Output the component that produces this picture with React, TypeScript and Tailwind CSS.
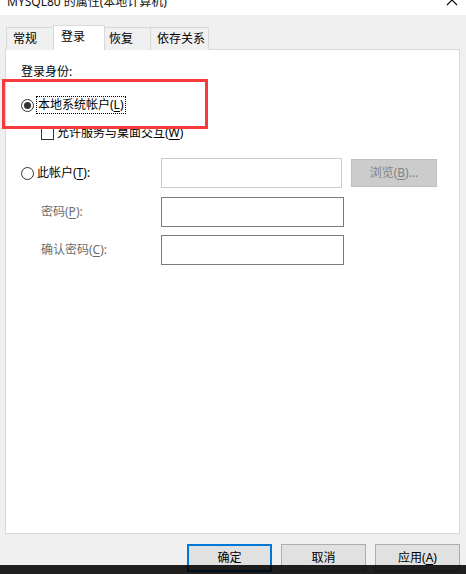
import React from "react";

const FONT = "font-['Noto_Sans','Noto_Sans_CJK_SC',sans-serif]";

function Radio({ checked }: { checked?: boolean }) {
  return (
    <span className="w-[13px] h-[13px] rounded-full border border-[#333333] bg-white flex items-center justify-center shrink-0">
      {checked && <span className="w-[7px] h-[7px] rounded-full bg-[#333333]" />}
    </span>
  );
}

function U({ children }: { children: React.ReactNode }) {
  return <span className="underline underline-offset-[2px]">{children}</span>;
}

export default function App() {
  return (
    <div
      className={`relative w-[466px] h-[574px] overflow-hidden bg-[#f0f0f0] text-[12px] leading-[16px] text-black ${FONT}`}
    >
      {/* title bar (cut off) */}
      <div className="h-[15px] bg-white overflow-hidden flex justify-between">
        <div className="ml-[7px] mt-[-6px] text-[12px] leading-[16px] text-[#111] whitespace-nowrap">
          MYSQL80 的属性(本地计算机)
        </div>
        <svg
          className="mr-[8px] mt-[-6px] shrink-0"
          width="12"
          height="12"
          viewBox="0 0 12 12"
        >
          <path d="M1 1 L11 11 M11 1 L1 11" stroke="#000" strokeWidth="1.1" fill="none" />
        </svg>
      </div>

      {/* tabs */}
      <div className="mt-[10px] h-[25px] pl-[6px] flex items-end">
        <div className="w-[47px] h-[23px] border-l border-t border-[#d9d9d9] bg-[#f0f0f0] pl-[6px] flex items-center">
          常规
        </div>
        <div className="relative z-10 w-[52px] h-[25px] border-l border-r border-t border-[#d9d9d9] bg-white pl-[7px] pb-[2px] flex items-center">
          登录
        </div>
        <div className="w-[46px] h-[23px] border-r border-t border-[#d9d9d9] bg-[#f0f0f0] pl-[4px] flex items-center">
          恢复
        </div>
        <div className="w-[58px] h-[23px] border-r border-t border-[#d9d9d9] bg-[#f0f0f0] pl-[6px] flex items-center">
          依存关系
        </div>
      </div>

      {/* panel */}
      <div className="-mt-[1px] ml-[5px] w-[455px] h-[485px] border border-[#d9d9d9] bg-white pt-[14px] pl-[15px]">
        <div className="h-[16px]">登录身份:</div>

        <div className="mt-[16px] h-[18px] flex items-center">
          <Radio checked />
          <span className="ml-[2px] h-[18px] px-[1px] border border-dotted border-black flex items-center">
            本地系统帐户(<U>L</U>)
          </span>
        </div>

        <div className="mt-[11px] h-[16px] pl-[20px] flex items-center">
          <span className="w-[13px] h-[13px] border border-[#333333] bg-white shrink-0" />
          <span className="ml-[3px]">
            允许服务与桌面交互(<U>W</U>)
          </span>
        </div>

        <div className="mt-[17px] h-[30px] flex items-center">
          <div className="w-[140px] flex items-center">
            <Radio />
            <span className="ml-[3px]">
              此帐户(<U>T</U>):
            </span>
          </div>
          <div className="w-[181px] h-[30px] border border-[#cccccc] bg-white" />
          <div className="ml-[9px] w-[86px] h-[28px] border border-[#bfbfbf] bg-[#cccccc] text-[#838383] flex items-center justify-center">
            浏览(<U>B</U>)...
          </div>
        </div>

        <div className="mt-[9px] h-[30px] flex items-center">
          <div className="w-[140px] pl-[20px] text-[#6d6d6d]">
            密码(<U>P</U>):
          </div>
          <div className="w-[183px] h-[30px] border border-[#7a7a7a] bg-white" />
        </div>

        <div className="mt-[8px] h-[30px] flex items-center">
          <div className="w-[140px] pl-[20px] text-[#6d6d6d]">
            确认密码(<U>C</U>):
          </div>
          <div className="w-[183px] h-[30px] border border-[#7a7a7a] bg-white" />
        </div>
      </div>

      {/* buttons */}
      <div className="mt-[10px] pr-[6px] flex justify-end gap-[9px]">
        <div className="w-[85px] h-[28px] border-2 border-[#0078d7] bg-[#e1e1e1] flex items-center justify-center">
          确定
        </div>
        <div className="w-[85px] h-[28px] border border-[#adadad] bg-[#e1e1e1] flex items-center justify-center">
          取消
        </div>
        <div className="w-[85px] h-[28px] border border-[#adadad] bg-[#e1e1e1] flex items-center justify-center">
          应用(<U>A</U>)
        </div>
      </div>

      {/* red annotation box */}
      <div className="absolute left-[2px] top-[79px] w-[206px] h-[50px] border-[3px] border-[#f53b3b]" />

      {/* dark taskbar strip */}
      <div className="absolute left-0 bottom-0 w-full h-[9px] bg-black/[0.87]" />
    </div>
  );
}
